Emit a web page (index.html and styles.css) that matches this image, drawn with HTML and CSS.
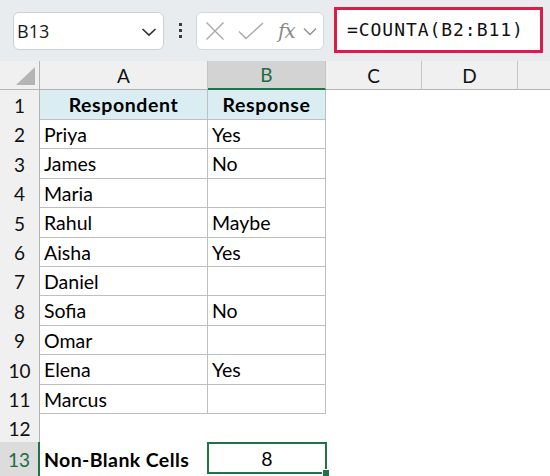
FILE: index.html
```html
<!DOCTYPE html>
<html>
<head>
<meta charset="utf-8">
<link rel="stylesheet" href="styles.css">
</head>
<body>
<div class="app">
  <div class="toolbar">
    <div class="namebox">
      <span class="name">B13</span>
      <svg class="chev" width="16" height="10" viewBox="0 0 16 10"><path d="M1.5 2 L8 8.2 L14.5 2" fill="none" stroke="#303030" stroke-width="1.6"/></svg>
    </div>
    <div class="dots"><i></i><i></i><i></i></div>
    <div class="fxbox">
      <svg class="ico-x" width="20" height="20" viewBox="0 0 20 20"><path d="M1.5 1.5 L18.5 18.5 M18.5 1.5 L1.5 18.5" stroke="#a8a8a8" stroke-width="1.4" fill="none"/></svg>
      <svg class="ico-ok" width="26" height="18" viewBox="0 0 26 18"><path d="M1 9.5 L8 16.5 L25 1" stroke="#a8a8a8" stroke-width="1.4" fill="none"/></svg>
      <span class="fx">fx</span>
      <svg class="chev2" width="14" height="9" viewBox="0 0 14 9"><path d="M1 1.5 L7 7.5 L13 1.5" fill="none" stroke="#909090" stroke-width="1.4"/></svg>
    </div>
    <div class="formula">=COUNTA(B2:B11)</div>
  </div>

  <div class="sheet">
    <div class="corner"><span class="tri"></span></div>
    <div class="colh">A</div>
    <div class="colh sel">B</div>
    <div class="colh">C</div>
    <div class="colh">D</div>
    <div class="colh last"></div>

    <div class="rowh">1</div><div class="c t hd">Respondent</div><div class="c t hd">Response</div><div></div><div></div><div></div>
    <div class="rowh">2</div><div class="c t">Priya</div><div class="c t">Yes</div><div></div><div></div><div></div>
    <div class="rowh">3</div><div class="c t">James</div><div class="c t">No</div><div></div><div></div><div></div>
    <div class="rowh">4</div><div class="c t">Maria</div><div class="c t"></div><div></div><div></div><div></div>
    <div class="rowh">5</div><div class="c t">Rahul</div><div class="c t">Maybe</div><div></div><div></div><div></div>
    <div class="rowh">6</div><div class="c t">Aisha</div><div class="c t">Yes</div><div></div><div></div><div></div>
    <div class="rowh">7</div><div class="c t">Daniel</div><div class="c t"></div><div></div><div></div><div></div>
    <div class="rowh">8</div><div class="c t">Sofia</div><div class="c t">No</div><div></div><div></div><div></div>
    <div class="rowh">9</div><div class="c t">Omar</div><div class="c t"></div><div></div><div></div><div></div>
    <div class="rowh">10</div><div class="c t">Elena</div><div class="c t">Yes</div><div></div><div></div><div></div>
    <div class="rowh">11</div><div class="c t">Marcus</div><div class="c t"></div><div></div><div></div><div></div>
    <div class="rowh">12</div><div class="c"></div><div class="c"></div><div></div><div></div><div></div>
    <div class="rowh selr">13</div><div class="c bold">Non-Blank Cells</div><div class="c active">8<span class="handle"></span></div><div></div><div></div><div></div>
  </div>
</div>
</body>
</html>
```

FILE: styles.css
```css
* { box-sizing: border-box; }
html, body { margin: 0; padding: 0; }
body {
  width: 550px;
  height: 476px;
  overflow: hidden;
  background: #ffffff;
  font-family: Lato, "Noto Sans", sans-serif;
  color: #000;
}
.app { width: 550px; height: 476px; display: flex; flex-direction: column; }

.toolbar {
  height: 61px;
  flex: none;
  background: #e9ecef;
  position: relative;
  display: flex;
  align-items: center;
}
.namebox {
  margin-left: 13px;
  width: 151px;
  height: 38px;
  background: #fff;
  border: 1px solid #cdd0d3;
  border-radius: 6px;
  display: flex;
  align-items: center;
  justify-content: space-between;
  padding: 0 6px 0 3px;
}
.name {
  font-family: "Open Sans", "Noto Sans", sans-serif;
  font-size: 18px;
  color: #1a1a1a;
}
.chev { display: block; margin-top: 2px; }
.dots {
  width: 32px;
  display: flex;
  flex-direction: column;
  align-items: center;
  gap: 3px;
}
.dots i { width: 3px; height: 3px; background: #3c3c3c; display: block; }
.fxbox {
  width: 128px;
  height: 38px;
  background: #fff;
  border: 1px solid #d5d8db;
  border-radius: 6px;
  display: flex;
  align-items: center;
  padding-left: 8px;
}
.ico-x { display: block; margin-top: 1px; }
.ico-ok { display: block; margin-left: 13px; margin-top: 1px; }
.fx {
  font-family: "DejaVu Serif", "Liberation Serif", serif;
  font-style: italic;
  font-size: 20px;
  color: #8a8a8a;
  margin-left: 14px;
  letter-spacing: -1px;
}
.chev2 { display: block; margin-left: 8px; margin-top: 2px; }
.formula {
  margin-left: 10px;
  width: 209px;
  height: 46px;
  margin-top: -2px;
  background: #fff;
  border: 3px solid #e0194a;
  display: flex;
  align-items: center;
  padding-left: 10px;
  font-family: "DejaVu Sans Mono", "Liberation Mono", monospace;
  font-size: 18px;
  letter-spacing: 0.95px;
  color: #111;
}

.sheet {
  flex: 1;
  display: grid;
  grid-template-columns: 40px 168px 118px 96px 96px 32px;
  grid-template-rows: 29px 30px 29px 30px 29px 30px 29px 29px 30px 29px 30px 29px 28px 34px;
  font-size: 19.5px;
}
.corner {
  background: #f0f0f0;
  border-right: 1px solid #b4b4b4;
  border-bottom: 1px solid #b4b4b4;
  position: relative;
}
.tri {
  position: absolute;
  right: 4px;
  bottom: 4px;
  width: 0;
  height: 0;
  border-style: solid;
  border-width: 0 0 18px 19px;
  border-color: transparent transparent #b4b4b4 transparent;
}
.colh {
  background: #f0f0f0;
  border-bottom: 1px solid #b4b4b4;
  border-right: 1px solid #c4c4c4;
  display: flex;
  align-items: center;
  justify-content: center;
  font-size: 19px;
  color: #111;
}
.colh.sel {
  background: #d3d3d3;
  border-bottom: 2px solid #217346;
  color: #1e6b40;
}
.colh.last { border-right: none; }
.rowh {
  background: #f0f0f0;
  border-right: 1px solid #b4b4b4;
  display: flex;
  align-items: center;
  justify-content: center;
  font-size: 19px;
  color: #111;
}
.rowh.selr {
  background: #dcdcdc;
  border-right: 2px solid #217346;
  color: #1e6b40;
}
.c {
  display: flex;
  align-items: center;
  padding-left: 4px;
  white-space: nowrap;
}
.c.t {
  border-right: 1px solid #bfbfbf;
  border-bottom: 1px solid #bfbfbf;
}
.c.hd {
  background: #daedf3;
  font-weight: 700;
  letter-spacing: 0.6px;
  justify-content: center;
  padding-left: 0;
}
.bold { font-weight: 700; letter-spacing: 0.4px; }
.active {
  position: relative;
  border: 2px solid #217346;
  justify-content: center;
  padding-left: 0;
  margin-left: -1px;
  margin-right: -1px;
  margin-bottom: 2px;
}
.handle {
  position: absolute;
  right: -5px;
  bottom: -5px;
  width: 8px;
  height: 8px;
  background: #217346;
  border: 1px solid #fff;
}
```
